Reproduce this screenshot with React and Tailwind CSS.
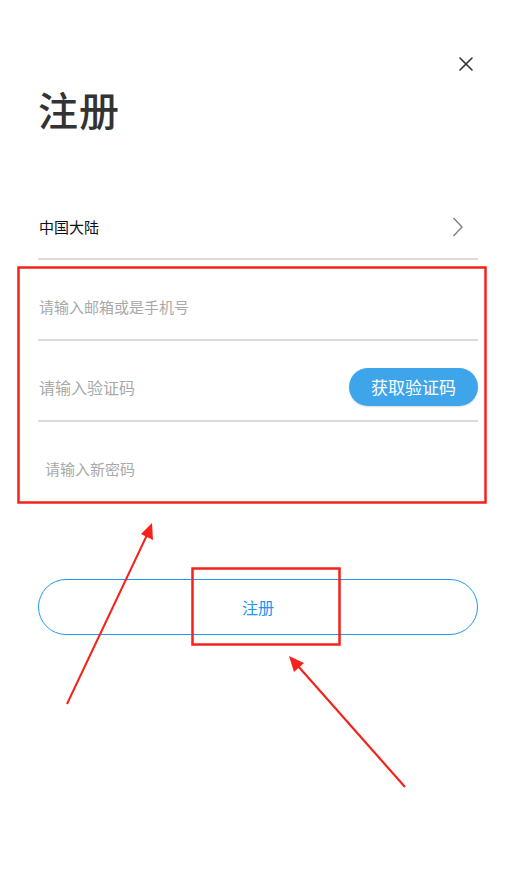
import { X } from 'lucide-react';

const font = { fontFamily: '"Noto Sans CJK SC", "Noto Sans", sans-serif' };

function Annotations() {
  return (
    <svg
      aria-hidden="true"
      className="pointer-events-none absolute left-0 top-0"
      width="516"
      height="895"
      viewBox="0 0 516 895"
    >
      <rect x="18.5" y="267.5" width="467" height="235" fill="none" stroke="#f5221b" strokeWidth="2.5" />
      <rect x="192.5" y="568.5" width="147" height="76" fill="none" stroke="#f5221b" strokeWidth="2.5" />
      <line x1="67" y1="704" x2="147" y2="535" stroke="#f5221b" strokeWidth="2" />
      <polygon points="152,523 153,540 141,534" fill="#f5221b" />
      <line x1="405" y1="787" x2="298" y2="666" stroke="#f5221b" strokeWidth="2.2" />
      <polygon points="289,656 304,663 294,672" fill="#f5221b" />
    </svg>
  );
}

export default function App() {
  return (
    <main className="relative min-h-[895px] w-[516px] overflow-hidden bg-white" style={font}>
      <div className="flex justify-end px-[38px] pt-[52px]">
        <X size={24} strokeWidth={1.6} className="text-[#333]" />
      </div>
      <h1 className="mt-[13px] px-[38px] text-[40px] font-medium leading-none tracking-[1px] text-[#333]">注册</h1>

      <section className="mt-[65px] px-[38px]">
        <div className="flex h-[66px] items-center justify-between border-b-2 border-[#dadada] pt-[2px]">
          <span className="pl-[1px] text-[15px] text-[#111]">中国大陆</span>
          <svg width="12" height="20" viewBox="0 0 12 20" className="mr-[14px]" aria-hidden="true">
            <polyline points="1.5,1 10,10 1.5,19" fill="none" stroke="#7a7f8c" strokeWidth="1.4" />
          </svg>
        </div>
        <div className="flex h-[81px] items-center border-b-2 border-[#dadada] pt-[15px]">
          <span className="pl-[1px] text-[15px] text-[#a9a9a9]">请输入邮箱或是手机号</span>
        </div>
        <div className="flex h-[81px] items-center justify-between border-b-2 border-[#dadada] pt-[13px]">
          <span className="pl-[1px] text-[16px] text-[#a9a9a9]">请输入验证码</span>
          <button className="flex h-[38px] w-[129px] items-center justify-center rounded-full bg-[#3fa5ea] text-[17px] text-white shadow-[0_1px_2px_rgba(0,0,0,0.15)]">
            获取验证码
          </button>
        </div>
        <div className="flex h-[81px] items-center pt-[14px]">
          <span className="pl-[7px] text-[15px] text-[#a9a9a9]">请输入新密码</span>
        </div>
      </section>

      <div className="mt-[76px] px-[38px]">
        <button className="flex h-[56px] w-full items-center justify-center rounded-full border-[1.5px] border-[#2196f3] text-[16px] text-[#2196f3]">
          注册
        </button>
      </div>

      <Annotations />
    </main>
  );
}
